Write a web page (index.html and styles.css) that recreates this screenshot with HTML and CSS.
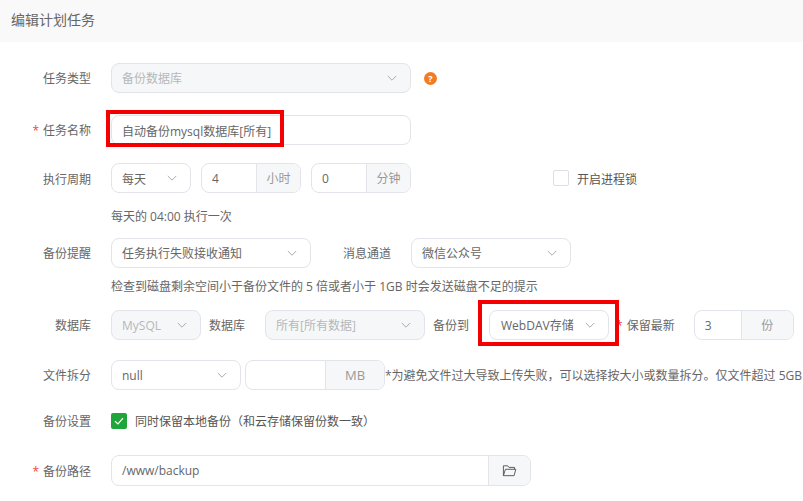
FILE: index.html
```html
<!DOCTYPE html>
<html lang="zh-CN">
<head>
<meta charset="utf-8">
<title>编辑计划任务</title>
<link rel="stylesheet" href="styles.css">
</head>
<body>
<svg width="0" height="0" class="defs"><defs>
<symbol id="chev" viewBox="0 0 10 10"><path d="M.8 3 5 7.2 9.2 3" fill="none" stroke="currentColor" stroke-width="1"/></symbol>
</defs></svg>
<div class="page">
  <header class="head">编辑计划任务</header>
  <form class="form">
    <div class="row r1">
      <label class="lab">任务类型</label>
      <div class="sel dis w300"><span>备份数据库</span><svg class="chev"><use href="#chev"/></svg></div>
      <span class="help">?</span>
    </div>
    <div class="row r2">
      <label class="lab"><i>*</i>任务名称</label>
      <div class="inp w300"><span>自动备份mysql数据库[所有]</span></div>
    </div>
    <div class="row r3">
      <label class="lab">执行周期</label>
      <div class="sel w80"><span>每天</span><svg class="chev"><use href="#chev"/></svg></div>
      <div class="grp w100 ml10"><span class="val">4</span><span class="add a44">小时</span></div>
      <div class="grp w100 ml10"><span class="val">0</span><span class="add a44">分钟</span></div>
      <div class="chk"><span class="box"></span><span>开启进程锁</span></div>
    </div>
    <p class="hint h1">每天的 04:00 执行一次</p>
    <div class="row r4">
      <label class="lab">备份提醒</label>
      <div class="sel w200"><span>任务执行失败接收通知</span><svg class="chev"><use href="#chev"/></svg></div>
      <span class="lab2">消息通道</span>
      <div class="sel w160"><span>微信公众号</span><svg class="chev"><use href="#chev"/></svg></div>
    </div>
    <p class="hint h2">检查到磁盘剩余空间小于备份文件的 5 倍或者小于 1GB 时会发送磁盘不足的提示</p>
    <div class="row r5">
      <label class="lab">数据库</label>
      <div class="sel dis w90"><span>MySQL</span><svg class="chev"><use href="#chev"/></svg></div>
      <span class="t1">数据库</span>
      <div class="sel dis w160"><span>所有[所有数据]</span><svg class="chev"><use href="#chev"/></svg></div>
      <span class="t2">备份到</span>
      <div class="sel w120 webdav"><span>WebDAV存储</span><svg class="chev"><use href="#chev"/></svg></div>
      <span class="t3"><i>*</i>保留最新</span>
      <div class="grp w100 keep"><span class="val">3</span><span class="add a52">份</span></div>
    </div>
    <div class="row r6">
      <label class="lab">文件拆分</label>
      <div class="sel w130"><span>null</span><svg class="chev"><use href="#chev"/></svg></div>
      <div class="grp w140 ml4"><span class="val"></span><span class="add a59">MB</span></div>
      <span class="note">*为避免文件过大导致上传失败，可以选择按大小或数量拆分。仅文件超过 5GB</span>
    </div>
    <div class="row r7">
      <label class="lab">备份设置</label>
      <div class="chk on"><span class="box"><svg viewBox="0 0 16 16" width="16" height="16"><path d="M4 8.2 7 11 12 5.2" fill="none" stroke="#fff" stroke-width="1.2"/></svg></span><span>同时保留本地备份（和云存储保留份数一致）</span></div>
    </div>
    <div class="row r8">
      <label class="lab"><i>*</i>备份路径</label>
      <div class="grp w420"><span class="val path">/www/backup</span><span class="add a42"><svg viewBox="0 0 16 16" width="15" height="15"><path d="M1.5 13.5V3h4.6l1.3 1.7h6v2M1.5 13.5h11.4l1.8-6.8H3.6L1.5 13.5Z" fill="none" stroke="#555" stroke-width="1"/></svg></span></div>
    </div>
  </form>
  <div class="mark m1"></div>
  <div class="mark m2"></div>
</div>
</body>
</html>
```
FILE: styles.css
```css
* { box-sizing: border-box; }
html, body { margin: 0; padding: 0; background: #fff; }
body { width: 803px; height: 501px; overflow: hidden; font-family: "Open Sans", "Noto Sans CJK SC", sans-serif; font-size: 12px; color: #666; }
.defs { position: absolute; }
.page { position: relative; width: 803px; height: 501px; overflow: hidden; }
.head { height: 42px; background: #f9f9f9; padding-left: 11px; line-height: 40px; font-size: 14px; color: #666; }
.form { padding-top: 21px; }
.row { display: flex; align-items: center; height: 30px; white-space: nowrap; }
.lab { width: 91px; text-align: right; margin-right: 20px; flex: none; color: #666; }
i { font-style: normal; color: #ef4444; margin-right: 4px; }
.sel, .inp, .grp { flex: none; height: 30px; border: 1px solid #e2e4ea; border-radius: 8px; background: #fff; display: flex; align-items: center; }
.sel { justify-content: space-between; padding: 0 13px 0 10px; color: #666; }
.inp { padding: 0 10px; }
.inp span { padding-top: 2px; }
.dis { background: #f6f7f8; color: #b5b7bb; }
.chev { width: 10px; height: 10px; color: #a8abb2; flex: none; }
.w80 { width: 80px; } .w90 { width: 90px; } .w100 { width: 100px; } .w120 { width: 120px; } .w130 { width: 130px; } .w140 { width: 140px; } .w160 { width: 160px; } .w200 { width: 200px; } .w300 { width: 300px; } .w420 { width: 420px; }
.ml10 { margin-left: 10px; } .ml4 { margin-left: 4px; }
.grp { overflow: hidden; }
.val { flex: 1; padding-left: 10px; color: #666; }
.add { flex: none; height: 100%; background: #f6f7f8; border-left: 1px solid #e2e4ea; display: flex; align-items: center; justify-content: center; color: #999; }
.a44 { width: 44px; } .a52 { width: 52px; } .a59 { width: 59px; } .a42 { width: 42px; }
.help { width: 13px; height: 13px; border-radius: 50%; background: #f07d25; color: #fff; font-size: 9px; font-weight: 700; line-height: 13px; text-align: center; margin-left: 13px; }
.r2 { margin-top: 22px; }
.r3 { margin-top: 18px; }
.r3 .lab, .r3 .sel span, .r3 .chk span:last-child { padding-top: 2px; }
.chk { display: flex; align-items: center; gap: 8px; color: #555; }
.r3 .chk { margin-left: 142px; }
.box { width: 16px; height: 16px; border: 1px solid #dcdfe6; border-radius: 2px; background: #fff; display: block; flex: none; }
.on .box { background: #20a53a; border: 0; }
.box svg { display: block; }
.hint { margin: 0; padding-left: 111px; color: #666; height: 17px; line-height: 17px; }
.h1 { margin-top: 15px; }
.r4 { margin-top: 13px; }
.lab2 { margin: 0 20px 0 32px; }
.h2 { margin-top: 10px; }
.r5 { margin-top: 15px; }
.t1 { margin: 0 20px 0 8px; }
.t2 { margin: 0 20px 0 8px; }
.t3 { margin-left: 7px; }
.webdav { padding-left: 11px; }
.keep { margin-left: 19px; }
.r6 { margin-top: 20px; }
.add { font-size: 12px; }
.a59 { font-size: 13px; }
.note { margin-left: 0; }
.r7 { margin-top: 23px; height: 16px; }
.r8 { margin-top: 26px; height: 31px; }
.r8 .grp { height: 31px; }
.path { padding-left: 10px; }
.mark { position: absolute; border: 4px solid #f50000; }
.m1 { left: 106px; top: 110px; width: 178px; height: 37px; }
.m2 { left: 478px; top: 300px; width: 141px; height: 46px; }
```
